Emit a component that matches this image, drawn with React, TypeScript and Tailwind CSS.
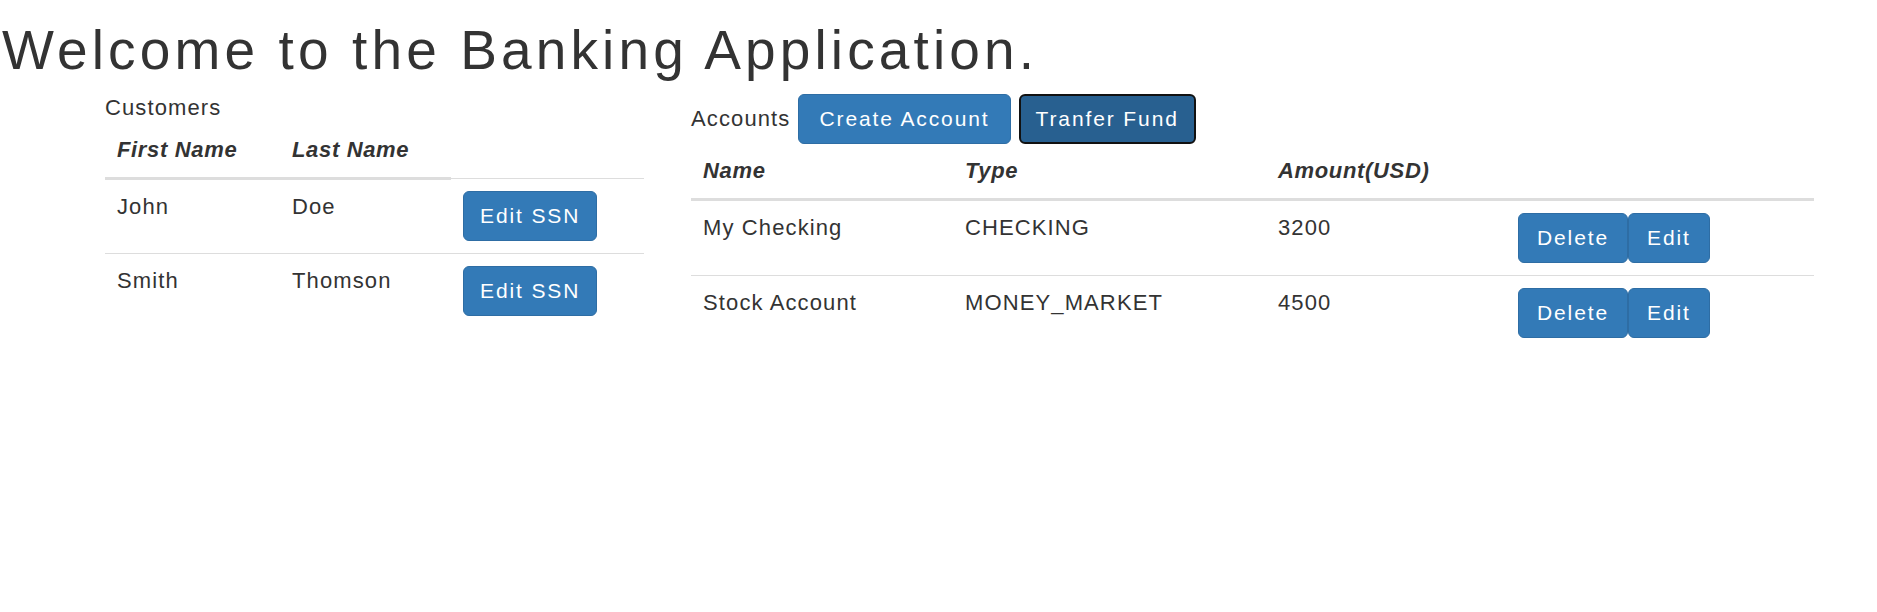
import React from "react";

const btn =
  "inline-block rounded-[6px] text-[21px] leading-[30px] text-white tracking-[0.09em] whitespace-nowrap";
const primary = `${btn} py-[9px] border border-[#2e6da4] bg-[#337ab7]`;

const customers = [
  { first: "John", last: "Doe" },
  { first: "Smith", last: "Thomson" },
];

const accounts = [
  { name: "My Checking", type: "CHECKING", amount: 3200 },
  { name: "Stock Account", type: "MONEY_MARKET", amount: 4500 },
];

const th =
  "text-left align-bottom px-[12px] py-[12px] leading-[30px] font-bold italic tracking-[0.03em] border-b-[3px] border-[#ddd]";
const td = "text-left align-top px-[12px] py-[12px] leading-[30px] border-t border-[#ddd]";

export default function App() {
  return (
    <div className="min-h-screen bg-white text-[#333] font-['Liberation_Sans',Arial,sans-serif] tracking-[0.07em]">
      <h1 className="pt-[21px] pl-[2px] text-[55px] leading-[59px] font-normal tracking-[0.075em]">
        Welcome to the Banking Application.
      </h1>

      <div className="flex items-start pl-[105px] pt-[13px] gap-[47px] text-[22px]">
        {/* Customers */}
        <section className="w-[539px]">
          <div className="leading-[30px]">Customers</div>
          <table className="w-full table-fixed border-collapse">
            <colgroup>
              <col className="w-[175px]" />
              <col className="w-[171px]" />
              <col />
            </colgroup>
            <thead>
              <tr>
                <th className={th}>First Name</th>
                <th className={th}>Last Name</th>
              </tr>
            </thead>
            <tbody>
              {customers.map((c) => (
                <tr key={c.first}>
                  <td className={td}>{c.first}</td>
                  <td className={td}>{c.last}</td>
                  <td className={td}>
                    <button className={`${primary} px-[16px]`}>Edit SSN</button>
                  </td>
                </tr>
              ))}
            </tbody>
          </table>
        </section>

        {/* Accounts */}
        <section className="w-[1123px] pt-px">
          <div className="flex items-baseline">
            <span className="leading-[30px]">Accounts</span>
            <button className={`${primary} px-[20px] ml-[8px]`}>Create Account</button>
            <button
              className={`${btn} ml-[8px] px-[15px] py-[8px] border-2 border-[#111] bg-[#286090]`}
            >
              Tranfer Fund
            </button>
          </div>
          <table className="w-full table-fixed border-collapse">
            <colgroup>
              <col className="w-[262px]" />
              <col className="w-[313px]" />
              <col className="w-[240px]" />
              <col />
            </colgroup>
            <thead>
              <tr>
                <th className={th}>Name</th>
                <th className={th}>Type</th>
                <th className={th}>Amount(USD)</th>
                <th className={th}></th>
              </tr>
            </thead>
            <tbody>
              {accounts.map((a) => (
                <tr key={a.name}>
                  <td className={td}>{a.name}</td>
                  <td className={td}>{a.type}</td>
                  <td className={td}>{a.amount}</td>
                  <td className={td}>
                    <div className="flex">
                      <button className={`${primary} px-[18px]`}>Delete</button>
                      <button className={`${primary} px-[18px]`}>Edit</button>
                    </div>
                  </td>
                </tr>
              ))}
            </tbody>
          </table>
        </section>
      </div>
    </div>
  );
}
